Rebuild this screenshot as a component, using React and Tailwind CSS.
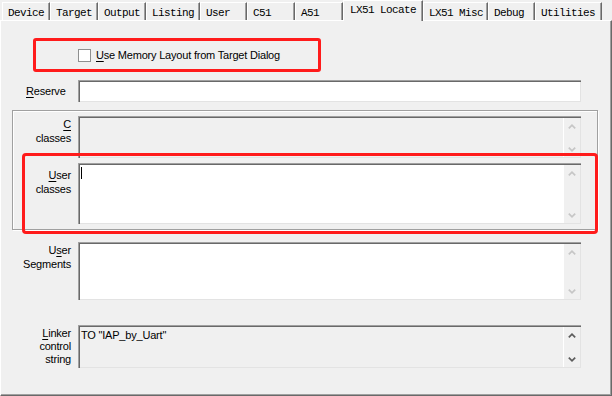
import React from "react"

const tabs = [
  ["Device", 48],
  ["Target", 48],
  ["Output", 48],
  ["Listing", 54],
  ["User", 47],
  ["C51", 48],
  ["A51", 48],
  ["LX51 Locate", 80, true],
  ["LX51 Misc", 65],
  ["Debug", 47],
  ["Utilities", 67],
]

function Tab({ label, width, active }) {
  if (active) {
    return (
      <div
        style={{ width }}
        className="relative z-10 -mb-px h-[21px] shrink-0 border-t border-l border-white border-r border-r-[#696969] bg-[#f0f0f0] pl-[6px] pt-[3px] leading-[12px] shadow-[inset_-1px_0_0_#a0a0a0]"
      >
        {label}
      </div>
    )
  }
  return (
    <div
      style={{ width }}
      className="h-[18px] shrink-0 border-t border-l border-white border-r border-r-[#696969] bg-[#f0f0f0] pl-[5px] pt-[4px] leading-[12px] shadow-[inset_-1px_0_0_#a0a0a0]"
    >
      {label}
    </div>
  )
}

function Chevron({ up, color }) {
  return (
    <svg width="8" height="5" viewBox="0 0 8 5">
      <polyline
        points={up ? "0.8,4.4 4,1.2 7.2,4.4" : "0.8,0.6 4,3.8 7.2,0.6"}
        fill="none"
        stroke={color}
        strokeWidth="1.7"
      />
    </svg>
  )
}

// sunken edit box with a vertical scroll strip
function EditBox({ height, white, dark, children }) {
  const arrow = dark ? "#5c5c5c" : "#c6c6c6"
  return (
    <div
      style={{ height }}
      className={`flex w-[503px] shrink-0 border-t border-l border-[#a0a0a0] border-r-white border-b-white shadow-[inset_1px_1px_0_#696969,inset_-1px_-1px_0_#e3e3e3] ${white ? "bg-white" : "bg-[#f0f0f0]"}`}
    >
      <div className="flex-1 pl-[2px] pt-[1px]">{children}</div>
      {height > 30 && (
        <div className="mr-px mb-px mt-px flex w-[17px] flex-col items-center justify-between border-l border-white bg-[#f0f0f0] pt-[6px] pb-[5px]">
          <Chevron up color={arrow} />
          <Chevron color={arrow} />
        </div>
      )}
    </div>
  )
}

function Label({ children, top = 0, leading = 14 }) {
  return (
    <div style={{ marginTop: top, lineHeight: `${leading}px` }} className="w-full pr-[7px] text-right">
      {children}
    </div>
  )
}

export default function App() {
  return (
    <div className="flex h-[396px] w-[612px] flex-col overflow-hidden bg-[#f0f0f0] text-black">
      <div className="flex h-[20px] items-end pl-[2px] font-['Liberation_Mono',monospace] text-[11px] tracking-[-0.6px]">
        {tabs.map(([label, width, active]) => (
          <Tab key={label} label={label} width={width} active={active} />
        ))}
      </div>

      <div className="relative flex flex-1 flex-col border border-t-white border-l-white border-r-[#696969] border-b-[#696969] shadow-[inset_-1px_-1px_0_#a0a0a0] font-['Liberation_Sans',Arial,sans-serif] text-[11px] tracking-[-0.2px]">
        {/* memory layout option */}
        <div className="mt-[17px] ml-[32px] flex h-[34px] w-[288px] items-center rounded-[3px] border-[3px] border-[#ff1b1b]">
          <div className="ml-[42px] h-[13px] w-[13px] border border-[#8e8f8f] bg-white" />
          <span className="ml-[5px]">
            <span className="underline underline-offset-[2px]">U</span>se Memory Layout from Target Dialog
          </span>
        </div>

        {/* reserve */}
        <div className="mt-[8px] flex items-center">
          <div className="w-[77px] pl-[25px]">
            <span className="underline underline-offset-[2px]">R</span>eserve
          </div>
          <EditBox height={22} white />
        </div>

        {/* classes group */}
        <div className="mt-[8px] ml-[11px] flex h-[120px] w-[586px] flex-col border border-[#a0a0a0] shadow-[1px_1px_0_white,inset_1px_1px_0_white]">
          <div className="mt-[5px] flex">
            <div className="w-[65px]">
              <Label top={1}>
                <span className="underline underline-offset-[2px]">C</span>
                <br />
                classes
              </Label>
            </div>
            <EditBox height={42} />
          </div>
          <div className="mt-[5px] flex">
            <div className="w-[65px]">
              <Label top={5}>
                <span className="underline underline-offset-[2px]">U</span>ser
                <br />
                classes
              </Label>
            </div>
            <EditBox height={61} white>
              <div className="mt-[2px] h-[12px] w-px bg-black" />
            </EditBox>
          </div>
        </div>

        {/* user segments */}
        <div className="mt-[12px] flex">
          <div className="w-[77px]">
            <Label top={1}>
              U<span className="underline underline-offset-[2px]">s</span>er
              <br />
              Segments
            </Label>
          </div>
          <EditBox height={58} white />
        </div>

        {/* linker control string */}
        <div className="mt-[25px] flex">
          <div className="w-[77px]">
            <Label top={2} leading={13}>
              <span className="underline underline-offset-[2px]">L</span>inker
              <br />
              control
              <br />
              string
            </Label>
          </div>
          <EditBox height={43} dark>
            <div className="leading-[13px] pt-[2px]">TO "IAP_by_Uart"</div>
          </EditBox>
        </div>

        {/* highlight around user classes */}
        <div className="absolute top-[132px] left-[21px] h-[81px] w-[576px] rounded-[4px] border-[3px] border-[#ff1b1b]" />
      </div>
    </div>
  )
}
